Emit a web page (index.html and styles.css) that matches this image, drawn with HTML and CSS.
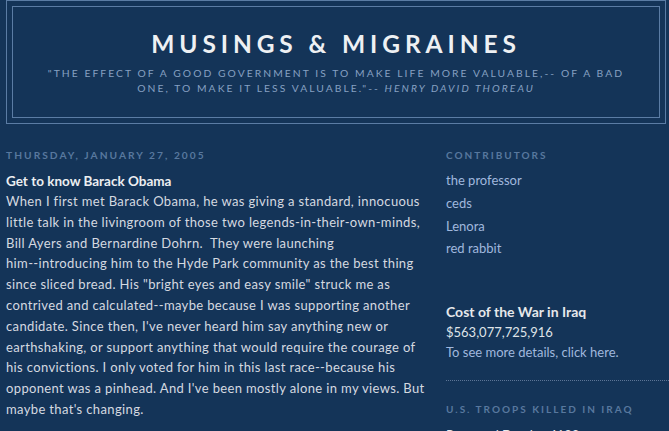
FILE: index.html
```html
<!DOCTYPE html>
<html>
<head>
<meta charset="utf-8">
<link rel="stylesheet" href="styles.css">
</head>
<body>
<div class="page">
  <header class="header">
    <div class="header-inner">
      <h1 class="blog-title">Musings &amp; Migraines</h1>
      <p class="blog-desc">"The effect of a good government is to make life more valuable,-- of a bad<br>one, to make it less valuable."-- <em>Henry David Thoreau</em></p>
    </div>
  </header>
  <div class="content">
    <main class="main">
      <h2 class="date-header">Thursday, January 27, 2005</h2>
      <div class="post">
        <h3 class="post-title">Get to know Barack Obama</h3>
        <div class="post-body">When I first met Barack Obama, he was giving a standard, innocuous<br>little talk in the livingroom of those two legends-in-their-own-minds,<br>Bill Ayers and Bernardine Dohrn.&nbsp; They were launching<br>him--introducing him to the Hyde Park community as the best thing<br>since sliced bread. His "bright eyes and easy smile" struck me as<br>contrived and calculated--maybe because I was supporting another<br>candidate. Since then, I've never heard him say anything new or<br>earthshaking, or support anything that would require the courage of<br>his convictions. I only voted for him in this last race--because his<br>opponent was a pinhead. And I've been mostly alone in my views. But<br>maybe that's changing.</div>
      </div>
    </main>
    <aside class="sidebar">
      <h2 class="sidebar-title">Contributors</h2>
      <ul class="contrib">
        <li><a href="#">the professor</a></li>
        <li><a href="#">ceds</a></li>
        <li><a href="#">Lenora</a></li>
        <li><a href="#">red rabbit</a></li>
      </ul>
      <div class="cost">
        <h3 class="cost-title">Cost of the War in Iraq</h3>
        <div class="cost-num">$563,077,725,916</div>
        <a href="#" class="cost-link">To see more details, click here.</a>
      </div>
      <h2 class="sidebar-title troops">U.S. Troops Killed in Iraq</h2>
      <div class="deaths">Reported Deaths: 4182</div>
    </aside>
  </div>
</div>
</body>
</html>
```

FILE: styles.css
```css
html, body {
  margin: 0;
  padding: 0;
  background: #143458;
  overflow: hidden;
}
body {
  font-family: Lato, "Open Sans", sans-serif;
  font-size: 13px;
  color: #d4d9e0;
}
a { color: #a0b8de; text-decoration: none; }

.page {
  width: 660px;
  margin-left: 6px;
}

.header {
  border: 1px solid #5b7ca4;
  margin-bottom: 24px;
}
.header-inner {
  margin: 5px;
  border: 1px solid #5b7ca4;
  text-align: center;
}
.blog-title {
  margin: 0;
  padding: 22px 20px 7px;
  font-size: 24.5px;
  line-height: 30px;
  font-weight: bold;
  letter-spacing: 0.2em;
  text-transform: uppercase;
  color: #eef0f3;
}
.blog-desc {
  margin: 0;
  padding: 0 20px 21px;
  font-size: 10.3px;
  line-height: 15px;
  letter-spacing: 0.2em;
  text-transform: uppercase;
  color: #86a0c2;
  white-space: nowrap;
}

.content {
  display: flex;
  justify-content: space-between;
}
.main { width: 410px; }
.sidebar { width: 223px; margin-right: -3px; }

.date-header, .sidebar-title {
  margin: 0;
  font-size: 10px;
  line-height: 14px;
  font-weight: bold;
  letter-spacing: 0.2em;
  text-transform: uppercase;
  color: #58789e;
}
.date-header { font-size: 10.2px; }
.post-title {
  margin: 9px 0 0;
  font-size: 13.5px;
  line-height: 20px;
  font-weight: bold;
  color: #eceef1;
}
.post-body {
  line-height: 20.8px;
  letter-spacing: 0.36px;
  white-space: nowrap;
}

.contrib {
  list-style: none;
  margin: 9px 0 0;
  padding: 0;
}
.contrib li {
  line-height: 19.5px;
  padding-bottom: 3.25px;
}
.cost {
  margin-top: 40px;
  padding-bottom: 18px;
  border-bottom: 1px dotted #5d7596;
  line-height: 20px;
}
.cost-title {
  margin: 0;
  font-size: 14px;
  line-height: 20px;
  font-weight: bold;
  color: #e6e8eb;
}
.cost-num { color: #dfe3e8; }
.cost-link { display: block; }
.troops { margin-top: 21px; }
.deaths {
  margin-top: 9px;
  line-height: 20px;
  color: #e6e8eb;
}
```
